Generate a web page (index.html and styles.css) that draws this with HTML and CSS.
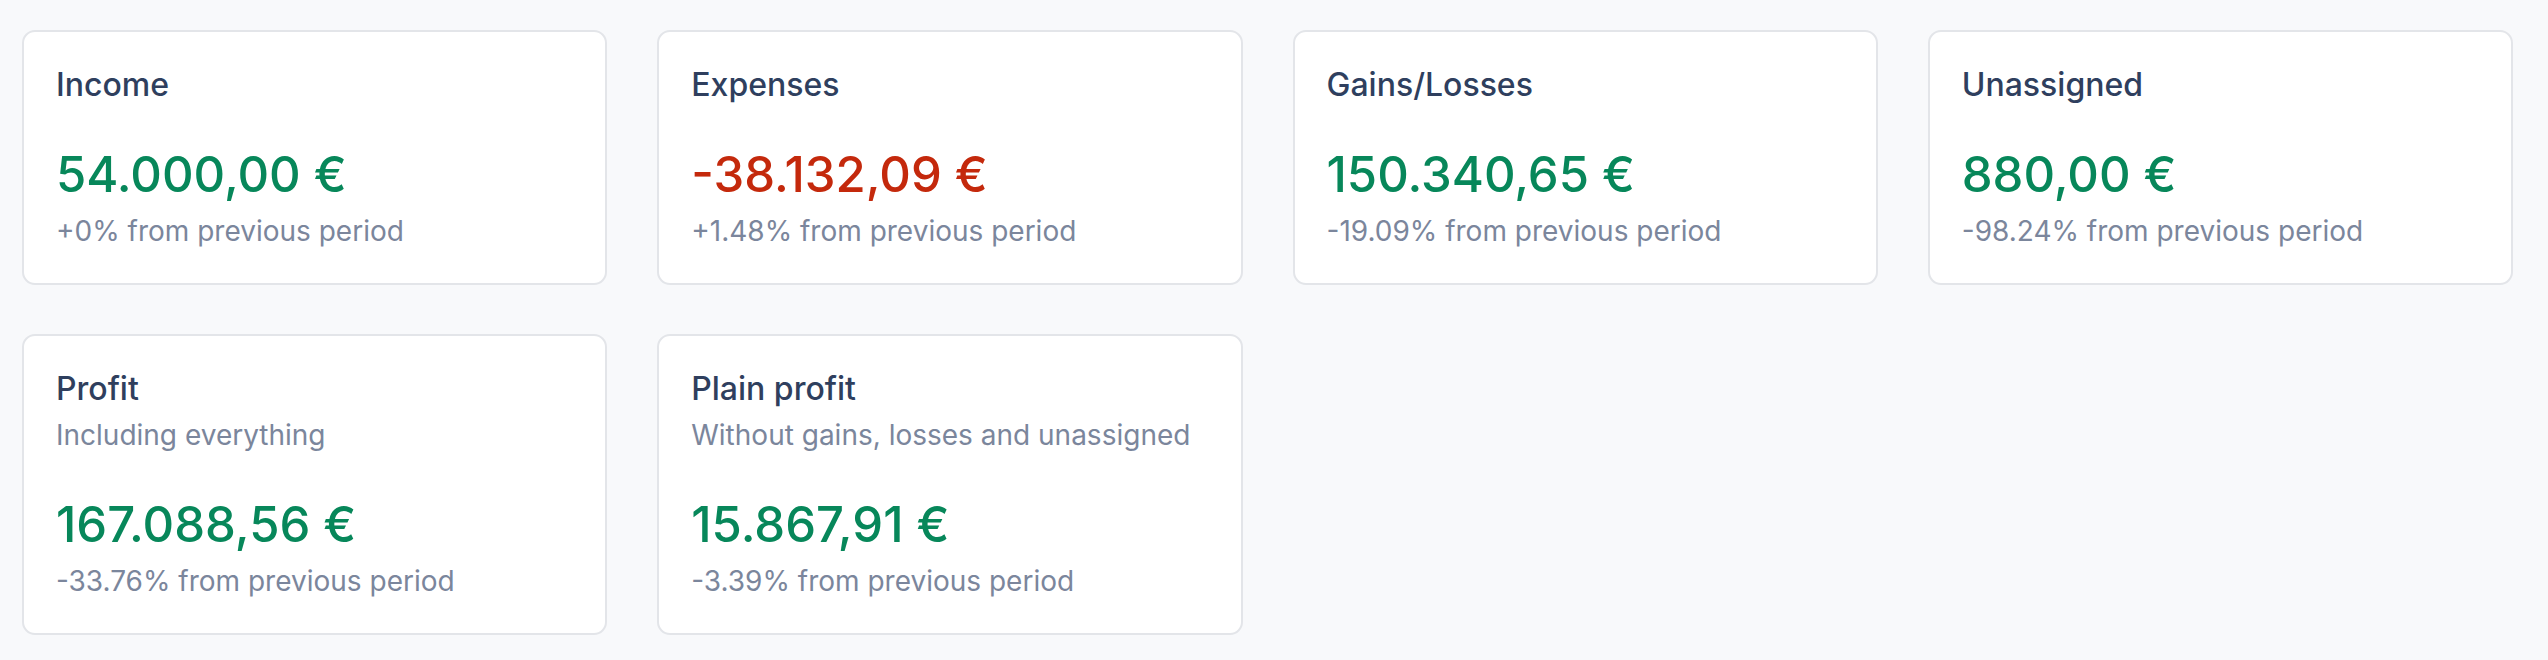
FILE: index.html
```html
<!DOCTYPE html>
<html lang="en">
<head>
<meta charset="utf-8">
<title>Summary</title>
<link rel="stylesheet" href="styles.css">
</head>
<body>
<main class="grid">
  <section class="card">
    <h3 class="title">Income</h3>
    <div class="value pos">54.000,00 €</div>
    <div class="change">+0% from previous period</div>
  </section>
  <section class="card">
    <h3 class="title">Expenses</h3>
    <div class="value neg">-38.132,09 €</div>
    <div class="change">+1.48% from previous period</div>
  </section>
  <section class="card">
    <h3 class="title">Gains/Losses</h3>
    <div class="value pos">150.340,65 €</div>
    <div class="change">-19.09% from previous period</div>
  </section>
  <section class="card">
    <h3 class="title">Unassigned</h3>
    <div class="value pos">880,00 €</div>
    <div class="change">-98.24% from previous period</div>
  </section>
  <section class="card">
    <h3 class="title">Profit</h3>
    <p class="desc">Including everything</p>
    <div class="value pos">167.088,56 €</div>
    <div class="change">-33.76% from previous period</div>
  </section>
  <section class="card">
    <h3 class="title">Plain profit</h3>
    <p class="desc">Without gains, losses and unassigned</p>
    <div class="value pos">15.867,91 €</div>
    <div class="change">-3.39% from previous period</div>
  </section>
</main>
</body>
</html>
```
FILE: styles.css
```css
html, body {
  margin: 0;
  padding: 0;
  background: #f8f9fb;
}
body {
  font-family: Inter, "Noto Sans", "Liberation Sans", sans-serif;
}
.grid {
  display: grid;
  grid-template-columns: repeat(4, 1fr);
  column-gap: 50px;
  row-gap: 49px;
  padding: 30px 35px 0 22px;
  align-items: start;
}
.card {
  background: #ffffff;
  border: 2px solid #e3e5e9;
  border-radius: 13px;
  padding: 31.5px 32px 31px 32px;
  display: flex;
  flex-direction: column;
}
.title {
  margin: 0;
  font-size: 32px;
  line-height: 42px;
  font-weight: 500;
  color: #2f3f5e;
}
.desc {
  margin: 4px 0 0 0;
  font-size: 28px;
  line-height: 42px;
  color: #7b869c;
}
.value {
  margin-top: 42.5px;
  font-size: 49px;
  line-height: 54px;
  font-weight: 500;
}
.pos { color: #07875a; }
.neg { color: #c4290c; }
.change {
  margin-top: 8px;
  font-size: 28px;
  line-height: 42px;
  color: #7b869c;
}
```
